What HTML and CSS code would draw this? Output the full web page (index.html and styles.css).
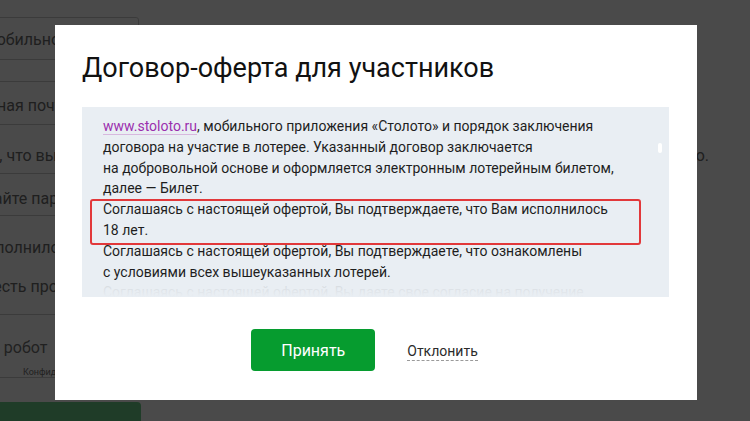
FILE: index.html
```html
<!DOCTYPE html>
<html lang="ru">
<head>
<meta charset="utf-8">
<title>Договор-оферта</title>
<link rel="stylesheet" href="styles.css">
</head>
<body>
<div class="page">
  <div class="form">
    <div class="field">Номер мобильного телефона</div>
    <div class="row r1"></div>
    <div class="row r2">Электронная почта</div>
    <div class="row r3"><span class="lead">Я подтверждаю, что вы получили код</span><span>на сайте Столото.</span></div>
    <div class="row r4">Придумайте пароль</div>
    <div class="row r5">Мне исполнилось 18 лет</div>
    <div class="row r6">Прочесть промо-условия</div>
    <div class="row r7">Я не робот<span class="small">Конфиденциальность</span></div>
    <div class="greenbtn"></div>
  </div>
</div>

<div class="overlay">
  <div class="modal">
    <h1 class="title">Договор-оферта для участников</h1>
    <div class="scrollbox">
      <div class="text">
        <p><a class="link" href="#">www.stoloto.ru</a>, мобильного приложения «Столото» и порядок заключения<br>договора на участие в лотерее. Указанный договор заключается<br>на добровольной основе и оформляется электронным лотерейным билетом,<br>далее — Билет.</p>
        <p class="marked">Соглашаясь с настоящей офертой, Вы подтверждаете, что Вам исполнилось<br>18 лет.</p>
        <p>Соглашаясь с настоящей офертой, Вы подтверждаете, что ознакомлены<br>с условиями всех вышеуказанных лотерей.</p>
        <p>Соглашаясь с настоящей офертой, Вы даете свое согласие на получение<br>информационных сообщений.</p>
      </div>
      <div class="thumb"></div>
      <div class="fade"></div>
    </div>
    <div class="actions">
      <button class="accept">Принять</button>
      <a class="decline" href="#">Отклонить</a>
    </div>
  </div>
</div>
</body>
</html>
```

FILE: styles.css
```css
* { box-sizing: border-box; }
html, body { margin: 0; padding: 0; }
body {
  width: 750px;
  height: 421px;
  overflow: hidden;
  background: #ffffff;
  font-family: Roboto, "Noto Sans", sans-serif;
}

.page {
  width: 750px;
  height: 421px;
  overflow: hidden;
}
.form {
  margin-left: -80px;
  padding-top: 17px;
  color: #6c6c6c;
  font-size: 16px;
}
.field {
  width: 219px;
  height: 43px;
  border: 1px solid #cccccc;
  border-radius: 3px;
  padding: 12px 10px;
  white-space: nowrap;
  overflow: hidden;
}
.row {
  width: 219px;
  border-bottom: 1px solid #cccccc;
  white-space: nowrap;
  overflow: hidden;
}
.r1 { height: 22px; }
.r2 { height: 43px; padding-top: 14px; padding-left: 5px; }
.r3 {
  width: 789px;
  height: 48px;
  padding-top: 21px;
  padding-left: 0;
  display: flex;
  justify-content: space-between;
  border-bottom: none;
}
.lead { margin-left: -40px; }
.r4 { height: 43px; padding-top: 15px; padding-left: 15px; border-top: 1px solid #cccccc; }
.r5 { height: 40px; padding-top: 22px; padding-left: 22px; border-bottom: none; }
.r6 { height: 59px; padding-top: 21px; padding-left: 35px; }
.r7 { height: 63px; padding-top: 23px; padding-left: 48px; font-size: 16px; color: #737373; }
.small { display: block; font-size: 9px; margin-top: 10px; margin-left: 55px; }
.greenbtn {
  margin-top: 24px;
  width: 221px;
  height: 30px;
  border-radius: 4px;
  background: #6ad089;
}

.overlay {
  position: fixed;
  inset: 0;
  background: rgba(0, 0, 0, 0.71);
  padding: 25px 0 0 55px;
}
.modal {
  width: 642px;
  height: 375px;
  background: #ffffff;
  padding: 26px 28px 0 27px;
}
.title {
  margin: 0;
  font-size: 27px;
  line-height: 34px;
  font-weight: 400;
  color: #111111;
}
.scrollbox {
  position: relative;
  margin-top: 22px;
  height: 190px;
  background: #e9eef3;
  overflow: hidden;
  padding: 9px 20px 0 21px;
}
.text {
  font-size: 14px;
  line-height: 20.8px;
  color: #1e1e1e;
  white-space: nowrap;
}
.text p { margin: 0; }
.link {
  color: #9b2fae;
  text-decoration: none;
  border-bottom: 1px solid #d7b9de;
}
.marked { position: relative; }
.marked::after {
  content: "";
  position: absolute;
  left: -13px;
  top: 0;
  width: 547px;
  height: 42px;
  border: 2px solid #e2383a;
  border-radius: 3px;
}
.thumb {
  position: absolute;
  left: 576px;
  top: 36px;
  width: 4px;
  height: 10px;
  border-radius: 2px;
  background: #ffffff;
}
.fade {
  position: absolute;
  left: 0;
  right: 0;
  bottom: 0;
  height: 16px;
  background: linear-gradient(to bottom, rgba(233, 238, 243, 0.88), #e9eef3);
}
.actions {
  display: flex;
  align-items: center;
  justify-content: center;
  gap: 32px;
  margin-top: 32px;
  padding-right: 22px;
}
.accept {
  width: 124px;
  height: 42px;
  border: none;
  border-radius: 4px;
  background: #069c2f;
  color: #ffffff;
  font-family: Roboto, "Noto Sans", sans-serif;
  font-size: 16px;
  padding: 0;
}
.decline {
  color: #2b2b2b;
  font-size: 14px;
  text-decoration: none;
  border-bottom: 1px dashed #9a9a9a;
  line-height: 17px;
  margin-top: 4px;
}
```
